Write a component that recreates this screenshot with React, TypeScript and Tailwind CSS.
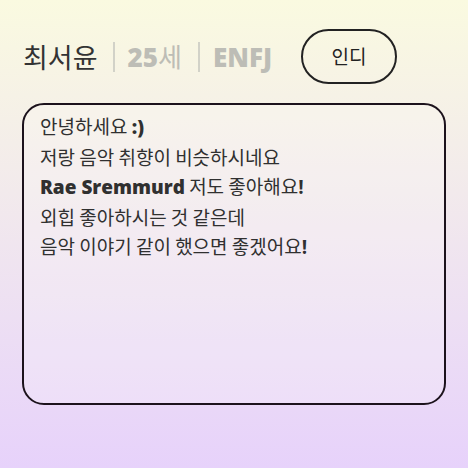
export default function App() {
  return (
    <main className="h-[468px] w-full overflow-hidden bg-gradient-to-b from-[#fafae0] to-[#e7d2fb] font-['Noto_Sans_CJK_KR',sans-serif] text-[#2b2b2b]">
      <header className="flex items-center pl-[23px] pt-[29px]">
        <h1 className="text-[27px] leading-none text-[#333]">최서윤</h1>
        <span className="ml-[15px] h-[30px] w-[2px] bg-[#d2d2c8]" />
        <span className="ml-[13px] text-[26px] leading-none text-[#bdbdb6]">
          <b className="font-['Open_Sans',sans-serif] font-extrabold">25</b>세
        </span>
        <span className="ml-[16px] h-[30px] w-[2px] bg-[#d2d2c8]" />
        <span className="ml-[13px] font-['Open_Sans',sans-serif] text-[26px] font-extrabold leading-none text-[#bdbdb6]">
          ENFJ
        </span>
        <button className="ml-[29px] flex h-[55px] w-[96px] items-center justify-center rounded-full border-2 border-[#222] text-[19px] text-[#222]">
          인디
        </button>
      </header>

      <section className="mx-[22px] mt-[19px] h-[302px] rounded-[22px] border-2 border-[#1c121c] bg-white/20 px-[16px] pt-[6px] text-[19px] leading-[29px] text-[#303030]">
        <p>
          안녕하세요{" "}
          <b className="font-['Open_Sans',sans-serif] font-extrabold">:)</b>
        </p>
        <p>저랑 음악 취향이 비슷하시네요</p>
        <p>
          <b className="font-['Open_Sans',sans-serif] font-extrabold">
            Rae Sremmurd
          </b>{" "}
          저도 좋아해요
          <b className="font-['Open_Sans',sans-serif]">!</b>
        </p>
        <p>외힙 좋아하시는 것 같은데</p>
        <p>
          음악 이야기 같이 했으면 좋겠어요
          <b className="font-['Open_Sans',sans-serif]">!</b>
        </p>
      </section>
    </main>
  );
}
